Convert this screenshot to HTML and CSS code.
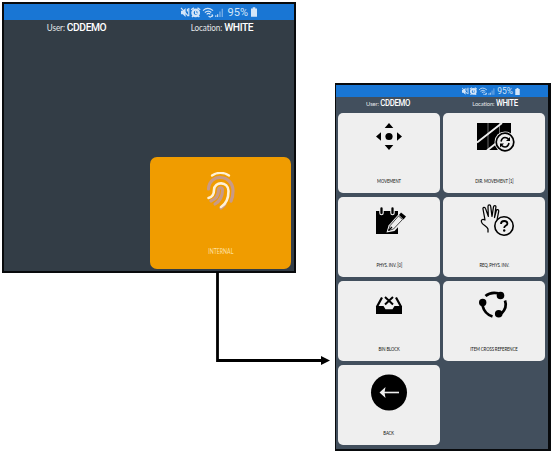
FILE: index.html
```html
<!DOCTYPE html>
<html lang="en">
<head>
<meta charset="utf-8">
<title>Internal menu</title>
<link rel="stylesheet" href="styles.css">
</head>
<body>
<svg class="defs" width="0" height="0" aria-hidden="true">
  <symbol id="status-icons" viewBox="0 0 48 12">
    <path d="M0 4h2l3-3v10L2 8H0z" fill="currentColor"/>
    <path d="M0 1l8 9M7 2v3M8.500 1v9" stroke="currentColor" stroke-width="1.300" fill="none"/>
    <circle cx="16" cy="6.300" r="3.500" stroke="currentColor" stroke-width="2.600" fill="none"/>
    <path d="M11 3l3-2M21 3l-3-2M12 11l2-2M20 11l-2-2M16 4v3h2" stroke="currentColor" stroke-width="1.500" fill="none"/>
    <path d="M24 4q5-5 11 0M26 6q4-3 7 0M28 8q2-2 4 0" stroke="currentColor" stroke-width="1.200" fill="none"/>
    <path d="M30 10l2 1 3-2M34 8v3" stroke="currentColor" stroke-width="1.200" fill="none"/>
    <path d="M38 9v2M40 8v3" stroke="currentColor" stroke-width="1.200"/>
    <path d="M42.500 5v6M45 2v9" stroke="currentColor" stroke-width="1.200" opacity=".6"/>
  </symbol>
  <symbol id="battery" viewBox="0 0 7 11"><path d="M2 0h3v1.500h2V11H0V1.500h2z" fill="currentColor"/></symbol>
</svg>

<main class="stage">
  <section class="screen screen-home">
    <div class="status">
      <svg class="status-icons"><use href="#status-icons"/></svg>
      <span class="percent">95%</span>
      <svg class="battery"><use href="#battery"/></svg>
    </div>
    <div class="info">
      <div class="user">User: <b>CDDEMO</b></div>
      <div class="location">Location: <b>WHITE</b></div>
    </div>
    <div class="tile-internal">
      <svg class="finger" width="30" height="38" viewBox="0 0 30 38" fill="none" stroke-linecap="round">
        <g stroke="#c99a86" stroke-width="3.200">
          <path d="M2.500 17C3 9 9 5 15 5.500c7 .5 12 6 12 13.500 0 4-.5 7-2 10"/>
          <path d="M9 32c5-3 7.500-7 7.500-14"/>
          <path d="M5 29c5-2 7.500-6 7.500-11 0-3 4-3 4 0"/>
          <path d="M15 36c2-1 3-2 4-4"/>
        </g>
        <path d="M6 3.500C11 0 18 0 23 3.500" stroke="#fff1d6" stroke-width="2.300"/>
        <path d="M2.500 26c4-1 5.500-4 5.500-8 0-9 14.500-9 14.500 1 0 7-2.500 13-7.500 16" stroke="#fff1d6" stroke-width="2.600"/>
      </svg>
      <span>INTERNAL</span>
    </div>
  </section>

  <section class="screen screen-menu">
    <div class="status">
      <svg class="status-icons"><use href="#status-icons"/></svg>
      <span class="percent">95%</span>
      <svg class="battery"><use href="#battery"/></svg>
    </div>
    <div class="info">
      <div class="user">User: <b>CDDEMO</b></div>
      <div class="location">Location: <b>WHITE</b></div>
    </div>
    <div class="tiles">
      <div class="tile">
        <svg viewBox="0 0 102 56">
          <circle cx="51" cy="23.500" r="3.600"/>
          <path d="M51 10l4.300 5h-8.600zM51 37l4.300-5h-8.600zM38 23.500l5-4.300v8.600zM64 23.500l-5-4.300v8.600z"/>
        </svg>
        <span>MOVEMENT</span>
      </div>
      <div class="tile">
        <svg viewBox="0 0 102 56">
          <path d="M34 10h34v27H34z"/>
          <path d="M45 10v27M56.500 10v27" stroke="#999" stroke-width=".7"/>
          <path d="M34 29.500L59 10M44 37.500L66 20" stroke="#efefef" stroke-width="1.900"/>
          <circle cx="62" cy="29" r="10.500" fill="#efefef"/>
          <circle cx="62" cy="29" r="8.800" fill="none" stroke="#000" stroke-width="1.700"/>
          <path d="M58 28.500q1-4 4-4 2 0 4 2M66 30q-1 4-4 4-2 0-4-2" fill="none" stroke="#000" stroke-width="1.600"/>
          <path d="M67 24v4h-4zM57 34.500v-4h4z"/>
        </svg>
        <span>DIR. MOVEMENT [1]</span>
      </div>
      <div class="tile">
        <svg viewBox="0 0 102 56">
          <path d="M38 14h22v23H38z"/>
          <g stroke="#efefef" stroke-width="4.500" stroke-linecap="round"><path d="M43.500 12v4M54.500 12v4"/></g>
          <g stroke="#000" stroke-width="2.300" stroke-linecap="round"><path d="M43.500 11.500v4.500M54.500 11.500v4.500"/></g>
          <path d="M48.500 35.500l2-7L62.500 15l6.500 5.500L56.500 34z" fill="#efefef"/>
          <path d="M50.500 33.500l1.700-5L60.500 19l4 3.500L55.500 32z" fill="#efefef" stroke="#000" stroke-width=".7"/>
          <path d="M50.500 33.500l3.500-3.500" stroke="#000" stroke-width="1.300"/>
          <path d="M61 18l2-2.500 5 4-2.500 3z"/>
        </svg>
        <span>PHYS. INV. [0]</span>
      </div>
      <div class="tile">
        <svg viewBox="0 0 102 56">
          <path d="M45 35v-3c-1-3-6-4-6.500-7-.7-2 .8-3.500 3.500-2l-2-11c-.4-2 2-2.300 2.500-.6l2.800 8-.3-10c0-2 2.500-2 2.700 0l1.300 10 1.500-9.500c.3-1.900 2.600-1.700 2.400.1L51.500 20.500l1.800-7c.8-1.700 2.700-.8 2.400.8L54.200 22" fill="none" stroke="#000" stroke-width="1.250" stroke-linejoin="round" stroke-linecap="round"/>
          <circle cx="61" cy="29" r="9.200" fill="#efefef" stroke="#000" stroke-width="1.600"/>
          <path d="M58 27q0-3 3.200-3t3.200 2.700c0 2-3.200 1.800-3.200 4.300" fill="none" stroke="#000" stroke-width="1.800"/>
          <circle cx="61.200" cy="33.500" r="1.200"/>
        </svg>
        <span>REQ. PHYS. INV.</span>
      </div>
      <div class="tile">
        <svg viewBox="0 0 102 56">
          <path d="M38 25h7.500l2 3.300h7l2-3.300H64v8H38z"/>
          <path d="M38.800 26l5.200-9.500M63.200 26L58 16.500" fill="none" stroke="#000" stroke-width="2.200"/>
          <path d="M47 16l8 7.500M55 16l-8 7.500" stroke="#000" stroke-width="2"/>
        </svg>
        <span>BIN BLOCK</span>
      </div>
      <div class="tile">
        <svg viewBox="0 0 102 56">
          <g fill="none" stroke="#000" stroke-width="2.700"><path d="M42.500 15q5-4.500 13-2.700M62 19.500q2.500 7-3.500 13M49.500 35.500q-8-2.500-10-11"/></g>
          <circle cx="57.500" cy="14.500" r="3.800"/><circle cx="39.700" cy="21.500" r="3.700"/><circle cx="55.700" cy="32.800" r="3.800"/>
        </svg>
        <span>ITEM CROSS REFERENCE</span>
      </div>
      <div class="tile">
        <svg viewBox="0 0 102 56">
          <circle cx="51" cy="27.500" r="18"/>
          <path d="M46 27.500h15" stroke="#efefef" stroke-width="1.600"/><path d="M41.500 27.500l6-5.500-1 5.500 1 5.500z" fill="#efefef"/>
        </svg>
        <span>BACK</span>
      </div>
    </div>
  </section>

  <svg class="connector" width="115" height="95" viewBox="0 0 115 95">
    <path d="M2.500 0v88.500H106" fill="none" stroke="#000" stroke-width="2.800"/>
    <path d="M106 84l9 4.500-9 4.500z"/>
  </svg>
</main>
</body>
</html>
```

FILE: styles.css
```css
* { box-sizing: border-box; }
body {
  margin: 0;
  background: #fff;
  font-family: Lato, "Liberation Sans", sans-serif;
}
.defs { position: absolute; }
.stage {
  position: relative;
  display: flex;
  align-items: flex-start;
  gap: 39px;
  width: 552px;
  height: 452px;
  padding: 2px 0 0 2px;
  overflow: hidden;
}
.screen {
  display: flex;
  flex-direction: column;
  flex: none;
  border: 2px solid #080a0c;
  color: #e3e7ea;
}
.screen-home {
  width: 294px;
  height: 271px;
  background: #333d46;
}
.screen-menu {
  width: 216px;
  height: 368px;
  margin-top: 81px;
  border-width: 2px 3px 2px 1px;
  background: #424f5d;
}
.status {
  display: flex;
  flex: none;
  align-items: center;
  justify-content: flex-end;
  background: #1976d4;
  color: #d3e5f8;
  font-family: Roboto, sans-serif;
}
.screen-home .status { height: 16px; padding-right: 37px; gap: 2px; font-size: 11px; }
.screen-menu .status { height: 12px; padding-right: 28px; gap: 1px; font-size: 8.5px; }
.screen-home .status-icons { width: 46px; height: 11px; }
.screen-menu .status-icons { width: 34px; height: 8.5px; }
.screen-home .battery { width: 6px; height: 10px; margin-left: 1px; }
.screen-menu .battery { width: 5px; height: 7px; margin-left: 1px; }
.info {
  display: grid;
  grid-template-columns: 1fr 1fr;
  flex: none;
  text-align: center;
  white-space: nowrap;
}
.info div { transform: scaleX(.92); }
.info b {
  color: #fff;
  font-family: Roboto, sans-serif;
  font-weight: 500;
}
.screen-home .info { height: 15px; font-size: 8.8px; line-height: 15px; letter-spacing: -.1px; }
.screen-home .info b { font-size: 11.2px; letter-spacing: -.5px; }
.screen-home .location { padding-left: 1px; }
.screen-menu .info { height: 12px; font-size: 6.3px; line-height: 12px; letter-spacing: -.1px; }
.screen-menu .info b { font-size: 8.5px; letter-spacing: -.4px; }
.screen-menu .user { padding-right: 2px; }
.tile-internal {
  display: flex;
  flex-direction: column;
  align-items: center;
  width: 141px;
  height: 112px;
  margin: auto 3px 2px auto;
  padding-top: 15px;
  border-radius: 7px;
  background: #f09c00;
  color: #ffe0a3;
  font-size: 7px;
  line-height: 8px;
}
.tile-internal span {
  margin-top: 37px;
  transform: scaleX(.75);
}
.tiles {
  display: grid;
  grid-template-columns: 102px 102px;
  grid-auto-rows: 80px;
  gap: 4px 3px;
  margin: 4px 0 0 2px;
}
.tile {
  display: flex;
  flex-direction: column;
  align-items: center;
  border-radius: 5px;
  background: #efefef;
  color: #101010;
  font-size: 6px;
  line-height: 8px;
  white-space: nowrap;
}
.tile svg { width: 102px; height: 56px; }
.tile span {
  margin-top: 8px;
  letter-spacing: -.1px;
  transform: scaleX(.7);
}
.connector { position: absolute; left: 215px; top: 272px; }
```
